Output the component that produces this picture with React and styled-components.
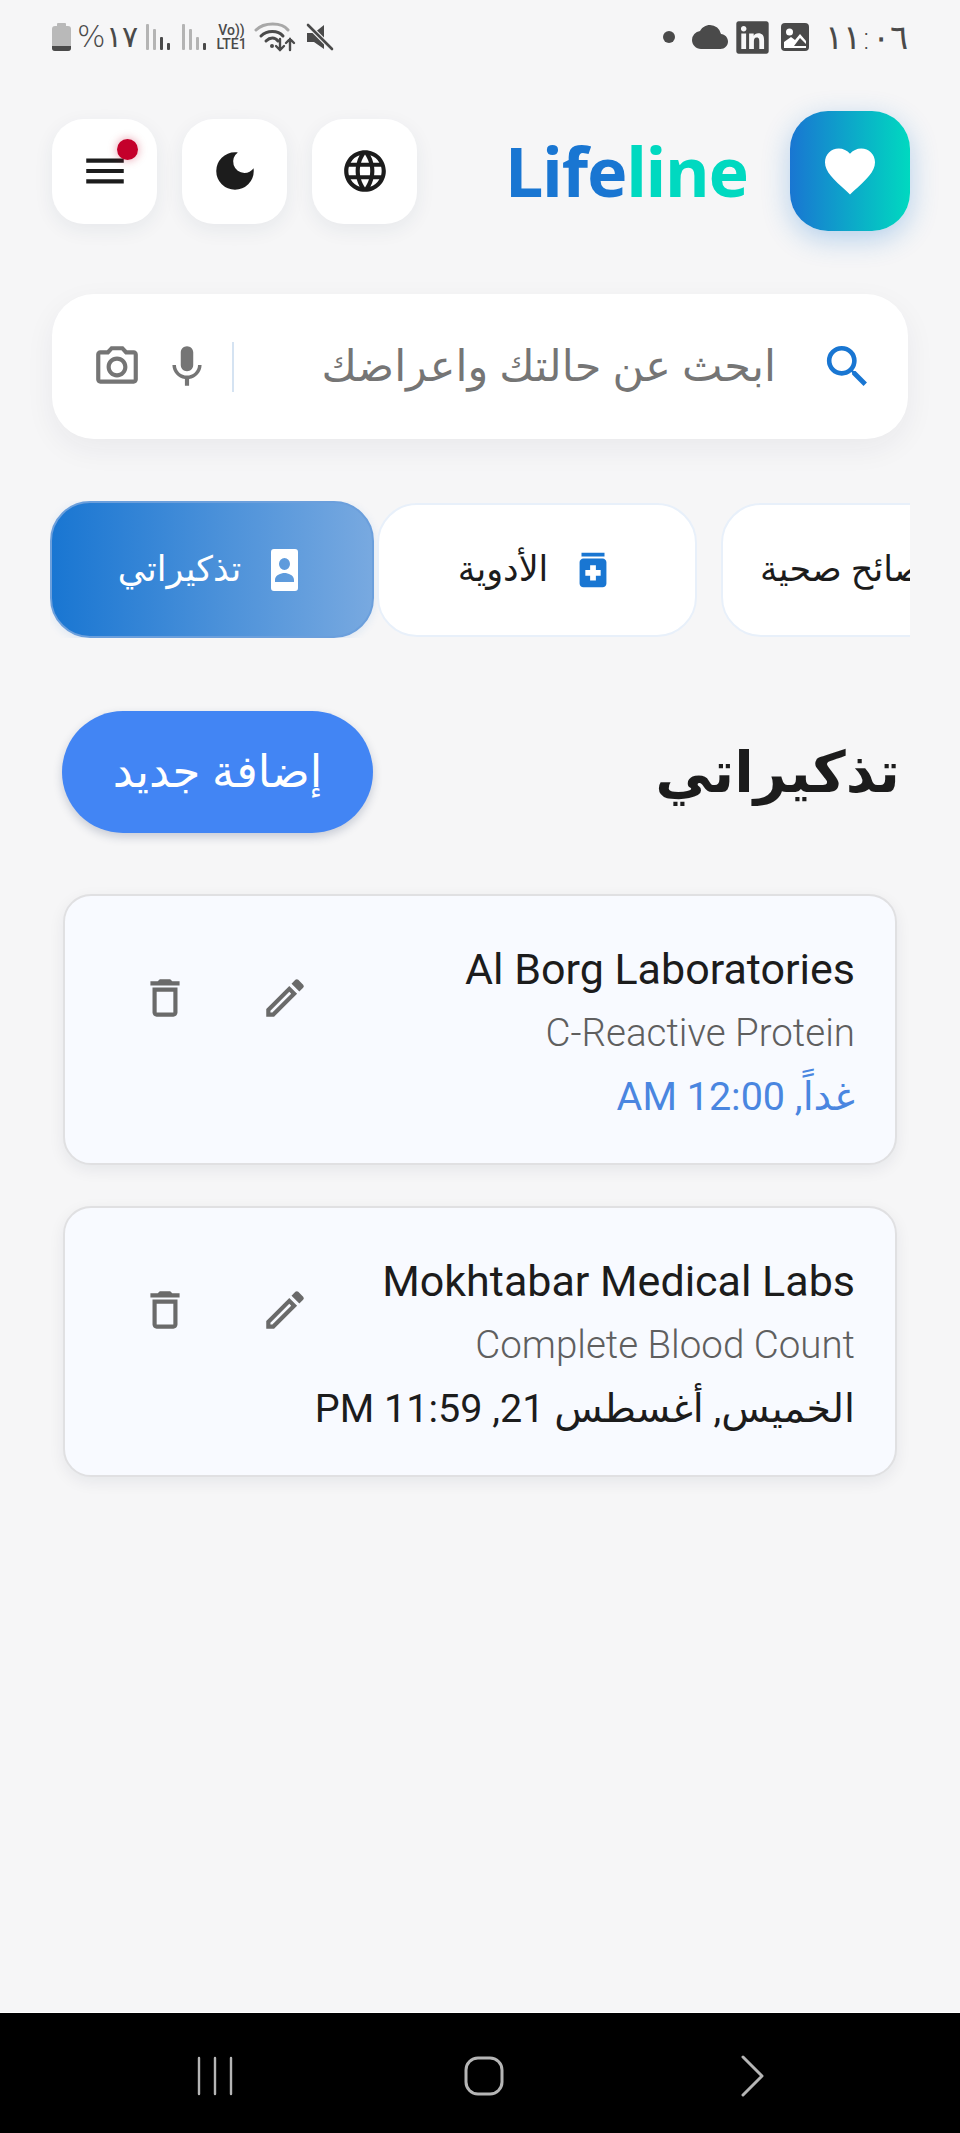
import React from "react";
import styled, { createGlobalStyle } from "styled-components";
import { MdMenu, MdDarkMode, MdLanguage, MdFavorite, MdSearch, MdOutlinePhotoCamera, MdMic, MdMedication, MdOutlineEdit, MdOutlineDelete, MdCloud, MdHealthAndSafety } from "react-icons/md";
import { FaLinkedin } from "react-icons/fa";

const Global = createGlobalStyle`
  html, body { margin: 0; padding: 0; background: #f6f6f7; }
  body { font-family: "Noto Sans", "DejaVu Sans", sans-serif; overflow: hidden; }
  * { box-sizing: border-box; }
`;

const Page = styled.div`
  width: 960px; height: 2133px; display: flex; flex-direction: column; background: #f6f6f7;
`;
const Main = styled.main`flex: 1; min-height: 0; padding-top: 21px;`;

const StatusBar = styled.div`
  direction: ltr; height: 32px; padding: 0 52px; display: flex; justify-content: space-between; align-items: center; color: #4a4a4a;
`;
const StatusSide = styled.div`display: flex; align-items: center;`;
const StatusSlot = styled.span`display: flex; align-items: center; margin-left: ${p => p.$ml || 0}px;`;
const StatusText = styled.span`
  font-family: "DejaVu Sans", sans-serif; font-size: ${p => p.$size || 30}px; font-weight: 200; line-height: 32px; word-spacing: ${p => p.$track || 0}px; color: #4a4a4a;
`;
const VoLte = styled.span`
  display: flex; flex-direction: column; align-items: center; font-family: "Roboto", sans-serif; font-size: 14px; font-weight: 500; line-height: 14px; width: 34px; color: #4a4a4a;
`;

const Header = styled.header`
  margin-top: 58px; height: 120px; padding: 0 50px 0 52px; display: flex; align-items: center; justify-content: space-between;
`;
const Brand = styled.div`display: flex; align-items: center; gap: 42px;`;
const BrandIcon = styled.div`
  width: 120px; height: 120px; border-radius: 38px; background: linear-gradient(90deg, #1976d2, #00d9c0);
  display: flex; align-items: center; justify-content: center; color: #fff; box-shadow: 0 8px 28px rgba(25,118,210,.3);
`;
const BrandName = styled.div`
  direction: ltr; font-family: "Noto Sans", sans-serif; font-weight: 700; font-size: 68px; line-height: 80px; letter-spacing: -1px; color: #1976d2;
`;
const BrandAccent = styled.span`color: #00d9c0;`;
const HeaderButtons = styled.div`direction: ltr; display: flex; gap: 25px;`;
const RoundButton = styled.button`
  position: relative; width: 105px; height: 105px; border: 0; padding: 0; border-radius: 32px; background: #fff; color: #1c1c1c;
  display: flex; align-items: center; justify-content: center; box-shadow: 0 6px 20px rgba(30,50,90,.07);
`;
const Dot = styled.span`
  position: absolute; top: 20px; right: 19px; width: 21px; height: 21px; border-radius: 50%; background: #c4002b; box-shadow: 0 0 10px rgba(196,0,43,.4);
`;

const Search = styled.div`
  margin: 63px 52px 0; height: 145px; border-radius: 42px; background: #fff; padding: 0 33px 0 40px;
  display: flex; align-items: center; box-shadow: 0 10px 30px rgba(30,40,70,.06); color: #757575;
`;
const SearchLabel = styled.div`
  flex: 1; margin-right: 44px; font-size: 43px; line-height: 60px; color: #757575; white-space: nowrap; text-align: right; padding-bottom: 4px;
`;
const SearchIconBox = styled.span`
  display: flex; color: ${p => p.$accent ? "#1976d2" : "#757575"}; margin: 0 ${p => p.$mr || 0}px 0 ${p => p.$ml || 0}px;
`;
const Divider = styled.span`width: 2px; height: 50px; background: #d5e3f2;`;

const Tabs = styled.div`
  direction: ltr; margin: 62px 50px 0; height: 137px; display: flex; align-items: center; overflow: hidden;
`;
const Tab = styled.div`
  direction: rtl; flex: none; display: flex; align-items: center; justify-content: center; gap: ${p => p.$active ? 30 : 22}px;
  width: ${p => p.$active ? 324 : 320}px; height: ${p => p.$active ? 137 : 134}px; margin-left: ${p => p.$ml || 0}px;
  padding-right: ${p => p.$active ? 8 : 0}px;
  border-radius: 40px; font-size: 35px; line-height: 48px;
  color: ${p => p.$active ? "#fff" : "#1c1c1c"};
  background: ${p => p.$active ? "linear-gradient(90deg, #1976d2, #78a9e0)" : "#fff"};
  border: 2px solid ${p => p.$active ? "#6b9fdc" : "#e8f0fa"};
  box-shadow: ${p => p.$active ? "0 2px 10px rgba(25,118,210,.12)" : "none"};
`;
const TabIconBox = styled.span`display: flex; color: #1976d2;`;
const TabText = styled.span`white-space: nowrap; padding-bottom: 4px;`;

const SectionHead = styled.div`
  margin: 73px 0 0; padding: 0 60px 0 62px; height: 122px; display: flex; align-items: center; justify-content: space-between;
`;
const Title = styled.h1`margin: 0; font-size: 57px; font-weight: 700; color: #1c1c1c; line-height: 70px; padding-bottom: 4px;`;
const AddButton = styled.button`
  width: 311px; height: 122px; border: 0; border-radius: 61px; background: #4285f4; color: #fff; font-family: inherit; font-size: 45px;
  box-shadow: 0 4px 10px rgba(30,50,90,.22); padding: 0 0 6px;
`;

const CardList = styled.div`margin: 61px 63px 0 63px; display: flex; flex-direction: column; gap: 41px;`;
const Card = styled.article`
  height: 271px; border-radius: 28px; background: #f8faff; border: 2px solid #e0e0e2; padding: 41px 40px 0 0;
  display: flex; justify-content: space-between; box-shadow: 0 5px 16px rgba(20,30,50,.07);
`;
const CardBody = styled.div`display: flex; flex-direction: column;`;
const CardTitle = styled.div`direction: ltr; text-align: right; font-family: "Roboto", sans-serif; font-size: 43px; line-height: 64px; height: 64px; color: #1c1c1c;`;
const CardSub = styled.div`direction: ltr; text-align: right; font-family: "Roboto", sans-serif; font-weight: 300; font-size: 38.5px; line-height: 64px; height: 64px; color: #5f5f5f;`;
const CardDate = styled.div`font-family: "Roboto", "DejaVu Sans", sans-serif; font-size: 39.5px; line-height: 64px; height: 64px; color: ${p => p.$tint ? "#4a86e0" : "#1c1c1c"};`;
const CardActions = styled.div`direction: ltr; display: flex; gap: 70px; padding: 36px 0 0 75px; color: #6a6a6a; height: 90px;`;

const NavBar = styled.nav`
  flex: none; height: 121px; background: #000; border-top: 1px solid #fff; display: grid; grid-template-columns: 1fr 1fr 1fr; align-items: center; justify-items: center; padding: 5px 74px 0 82px;
`;

const WifiIcon = () => (
  <svg width="42" height="30" viewBox="0 0 42 30" fill="none" strokeLinecap="round">
    <path d="M2 8 C10 0 28 0 34 8" stroke="#a8a8a8" strokeWidth="3" />
    <path d="M7 14 C13 8 24 8 29 14" stroke="#4a4a4a" strokeWidth="3" />
    <path d="M12 19 C16 15 21 15 24 19" stroke="#4a4a4a" strokeWidth="3" />
    <circle cx="18" cy="24" r="2" fill="#4a4a4a" />
    <path d="M26 17 V28 M22 24 L26 28 L30 24 M36 28 V17 M32 21 L36 17 L40 21" stroke="#4a4a4a" strokeWidth="2.4" />
  </svg>
);
const MuteIcon = () => (
  <svg width="28" height="28" viewBox="0 0 28 28">
    <path d="M1 10 H8 L18 2 V26 L8 19 H1 Z" fill="#4a4a4a" />
    <path d="M2 2 L26 26" stroke="#f6f6f7" strokeWidth="5" />
    <path d="M2 2 L26 26" stroke="#4a4a4a" strokeWidth="2.6" strokeLinecap="round" />
  </svg>
);
const Signal = ({ bars }) => (
  <svg width="24" height="26" viewBox="0 0 24 26">
    {[[0, 0], [7, 5], [14, 13], [21, 19]].map(([x, y], i) => (
      <rect key={i} x={x} y={y} width="3" height={26 - y} rx="1" fill={i >= bars ? "#4a4a4a" : "#b4b4b4"} />
    ))}
  </svg>
);
const Battery = () => (
  <svg width="19" height="28" viewBox="0 0 19 28">
    <rect x="5" y="0" width="9" height="4" rx="1" fill="#b9b9b9" />
    <rect x="0" y="3" width="19" height="25" rx="3" fill="#b9b9b9" />
    <path d="M0 23 H19 V25 A3 3 0 0 1 16 28 H3 A3 3 0 0 1 0 25 Z" fill="#4a4a4a" />
  </svg>
);
const PictureIcon = () => (
  <svg width="28" height="28" viewBox="0 0 28 28">
    <rect width="28" height="28" rx="4" fill="#4a4a4a" />
    <circle cx="8.5" cy="9" r="3.5" fill="#fff" />
    <path d="M3 23 V19 L10 14 L14 17 L19 11 L25 18 V21 L19 15 L13 23 Z" fill="#fff" />
    <path d="M3 23 H25 V25 H3 Z" fill="#fff" />
  </svg>
);
const NotePerson = () => (
  <svg width="27" height="42" viewBox="0 0 27 42">
    <path fillRule="evenodd" fill="#fff" d="M3 0 H24 A3 3 0 0 1 27 3 V39 A3 3 0 0 1 24 42 H3 A3 3 0 0 1 0 39 V3 A3 3 0 0 1 3 0 Z M13.5 9 A5.5 6 0 1 0 13.5 21 A5.5 6 0 1 0 13.5 9 Z M4 31 V33 H23 V31 C23 26 17 24 13.5 24 C10 24 4 26 4 31 Z" />
  </svg>
);
const NavBars = () => (
  <svg width="40" height="40" viewBox="0 0 40 40" stroke="#b5b5b5" strokeWidth="2.4" strokeLinecap="round">
    <path d="M3 2 V38 M19 2 V38 M35 2 V38" />
  </svg>
);
const NavHome = () => (
  <svg width="40" height="40" viewBox="0 0 40 40" fill="none" stroke="#b5b5b5" strokeWidth="3">
    <rect x="2" y="2" width="36" height="36" rx="12" />
  </svg>
);
const NavNext = () => (
  <svg width="24" height="42" viewBox="0 0 24 42" fill="none" stroke="#b5b5b5" strokeWidth="3" strokeLinecap="round" strokeLinejoin="round">
    <path d="M3 2 L22 21 L3 40" />
  </svg>
);

const reminders = [
  { name: "Al Borg Laboratories", test: "C-Reactive Protein", date: "غداً, 12:00 AM", tint: true },
  { name: "Mokhtabar Medical Labs", test: "Complete Blood Count", date: "الخميس, أغسطس 21, 11:59 PM" },
];

export default function App() {
  return (
    <Page dir="rtl">
      <Global />
      <Main>
        <StatusBar>
          <StatusSide>
            <Battery />
            <StatusSlot $ml={6}><StatusText>%١٧</StatusText></StatusSlot>
            <StatusSlot $ml={8}><Signal bars={2} /></StatusSlot>
            <StatusSlot $ml={12}><Signal bars={3} /></StatusSlot>
            <StatusSlot $ml={9}><VoLte><span>Vo))</span><span>LTE1</span></VoLte></StatusSlot>
            <StatusSlot $ml={5}><WifiIcon /></StatusSlot>
            <StatusSlot $ml={10}><MuteIcon /></StatusSlot>
          </StatusSide>
          <StatusSide>
            <svg width="12" height="12" viewBox="0 0 12 12"><circle cx="6" cy="6" r="6" fill="#4a4a4a" /></svg>
            <StatusSlot $ml={17}><MdCloud size={36} color="#4a4a4a" /></StatusSlot>
            <StatusSlot $ml={6}><FaLinkedin size={37} color="#4a4a4a" /></StatusSlot>
            <StatusSlot $ml={10}><PictureIcon /></StatusSlot>
            <StatusSlot $ml={16}><StatusText $size={34}>١١:٠٦</StatusText></StatusSlot>
          </StatusSide>
        </StatusBar>

        <Header>
          <Brand>
            <BrandIcon><MdFavorite size={60} /></BrandIcon>
            <BrandName>Life<BrandAccent>line</BrandAccent></BrandName>
          </Brand>
          <HeaderButtons>
            <RoundButton><MdMenu size={50} /><Dot /></RoundButton>
            <RoundButton><MdDarkMode size={50} /></RoundButton>
            <RoundButton><MdLanguage size={50} /></RoundButton>
          </HeaderButtons>
        </Header>

        <Search>
          <SearchIconBox $accent><MdSearch size={55} /></SearchIconBox>
          <SearchLabel>ابحث عن حالتك واعراضك</SearchLabel>
          <Divider />
          <SearchIconBox $mr={20} $ml={20}><MdMic size={50} /></SearchIconBox>
          <SearchIconBox><MdOutlinePhotoCamera size={50} /></SearchIconBox>
        </Search>

        <Tabs>
          <Tab $active><NotePerson /><TabText>تذكيراتي</TabText></Tab>
          <Tab $ml={3}><TabIconBox><MdMedication size={46} /></TabIconBox><TabText>الأدوية</TabText></Tab>
          <Tab $ml={24}><TabIconBox><MdHealthAndSafety size={46} /></TabIconBox><TabText>نصائح صحية</TabText></Tab>
        </Tabs>

        <SectionHead>
          <Title>تذكيراتي</Title>
          <AddButton>إضافة جديد</AddButton>
        </SectionHead>

        <CardList>
          {reminders.map(r => (
            <Card key={r.name}>
              <CardBody>
                <CardTitle>{r.name}</CardTitle>
                <CardSub>{r.test}</CardSub>
                <CardDate $tint={r.tint}>{r.date}</CardDate>
              </CardBody>
              <CardActions>
                <MdOutlineDelete size={50} />
                <MdOutlineEdit size={50} />
              </CardActions>
            </Card>
          ))}
        </CardList>
      </Main>
      <NavBar dir="ltr">
        <NavBars />
        <NavHome />
        <NavNext />
      </NavBar>
    </Page>
  );
}
